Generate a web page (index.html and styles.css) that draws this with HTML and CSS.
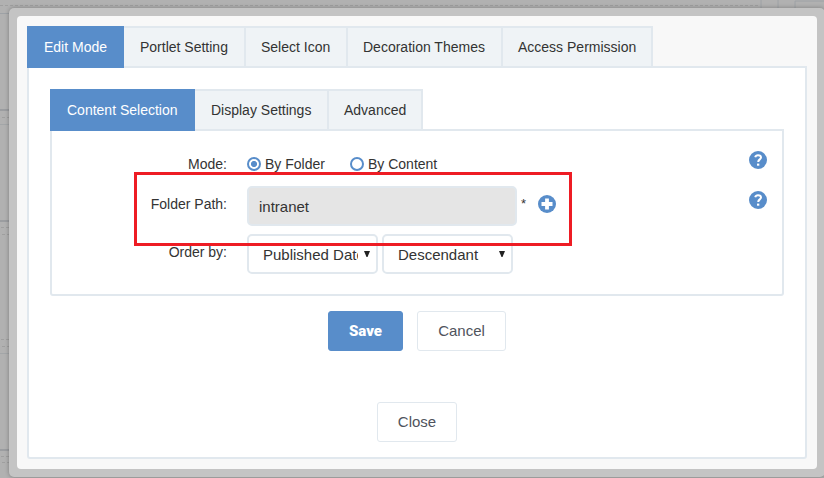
FILE: index.html
```
<!DOCTYPE html>
<html lang="en">
<head>
<meta charset="utf-8">
<title>Edit Mode</title>
<link rel="stylesheet" href="styles.css">
</head>
<body>
<svg class="backdrop" width="824" height="478" viewBox="0 0 824 478" aria-hidden="true">
  <g fill="none" stroke="#9b9da0">
    <path d="M0 5.5H760" stroke="#9f9f9f" stroke-dasharray="3 2"/>
    <path d="M761 0V8M778 0V8M795 8V1H824M0 13.5H9" stroke="#9ea2a6"/>
    <path d="M0 110H9M0 221H9M0 450H9" stroke-width="2"/>
    <path d="M0 124.5H9M0 353.5H9" stroke="#a3a6a8"/>
    <path d="M2 117.5H9M1 227.5H9M2 234.5H9M1 339.5H9M2 346.5H9M1 456.5H9M2 462.5H9" stroke="#9f9f9f" stroke-dasharray="3 2"/>
  </g>
</svg>
<div class="frame">
  <main class="dialog">
    <nav class="tabs">
      <a class="tab active t-edit">Edit Mode</a>
      <a class="tab t-portlet">Portlet Setting</a>
      <a class="tab t-icon">Select Icon</a>
      <a class="tab t-themes">Decoration Themes</a>
      <a class="tab t-access">Access Permission</a>
    </nav>
    <section class="panel">
      <nav class="tabs">
        <a class="tab active t-content">Content Selection</a>
        <a class="tab t-display">Display Settings</a>
        <a class="tab t-advanced">Advanced</a>
      </nav>
      <div class="form">
        <div class="row mode">
          <span class="label">Mode:</span>
          <span class="radio checked"></span><span class="choice first">By Folder</span>
          <span class="radio"></span><span class="choice">By Content</span>
          <svg class="help" width="18" height="18" viewBox="0 0 18 18"><circle cx="9" cy="9" r="9" fill="#588dca"/><path d="M6.2 6.2C6.6 4.8 7.6 4.2 9 4.2C10.8 4.2 12 5.2 12 6.6C12 8.4 9.2 8.5 9.2 10.9" fill="none" stroke="#fff" stroke-width="2"/><path d="M8 12.6H10.3V14.7H8Z" fill="#fff"/></svg>
        </div>
        <div class="row path">
          <span class="label">Folder Path:</span>
          <span class="field">intranet</span>
          <span class="star">*</span>
          <svg class="plus" width="18" height="18" viewBox="0 0 18 18"><circle cx="9" cy="9" r="9" fill="#588dca"/><path d="M9 3.5V14.5M3.5 9H14.5" stroke="#fff" stroke-width="3.8"/></svg>
          <svg class="help" width="18" height="18" viewBox="0 0 18 18"><circle cx="9" cy="9" r="9" fill="#588dca"/><path d="M6.2 6.2C6.6 4.8 7.6 4.2 9 4.2C10.8 4.2 12 5.2 12 6.6C12 8.4 9.2 8.5 9.2 10.9" fill="none" stroke="#fff" stroke-width="2"/><path d="M8 12.6H10.3V14.7H8Z" fill="#fff"/></svg>
        </div>
        <div class="row order">
          <span class="label">Order by:</span>
          <span class="select"><span class="value">Published Date</span><svg class="arrow" width="6" height="6" viewBox="0 0 6 6"><path d="M0 0H6L3.5 6H2.5Z" fill="#222"/></svg></span>
          <span class="select"><span class="value">Descendant</span><svg class="arrow" width="6" height="6" viewBox="0 0 6 6"><path d="M0 0H6L3.5 6H2.5Z" fill="#222"/></svg></span>
        </div>
      </div>
      <div class="actions">
        <button class="btn save">Save</button>
        <button class="btn cancel">Cancel</button>
      </div>
      <button class="btn close">Close</button>
    </section>
  </main>
</div>
<div class="highlight"></div>
</body>
</html>
```

FILE: styles.css
```
* { box-sizing: border-box; }
body {
  margin: 0;
  width: 824px;
  height: 478px;
  overflow: hidden;
  padding: 8px 0 0 9px;
  background: #b1b1b1;
  font: 14px/18px "Liberation Sans", Arial, sans-serif;
  color: #333;
}
.backdrop { position: absolute; left: 0; top: 0; z-index: -1; }
.frame {
  width: 816px;
  height: 469px;
  padding: 8px;
  background: #c4c4c4;
  border-radius: 5px;
  box-shadow: 0 0 4px rgba(0, 0, 0, .3);
}
.dialog {
  height: 453px;
  padding: 10px;
  background: #f8f8f8;
  border-radius: 4px;
}
.tabs { display: flex; height: 42px; margin-bottom: -2px; }
.tab {
  height: 42px;
  padding: 10px 0 0 15px;
  background: #eff3f6;
  border: solid #e1e8ee;
  border-width: 2px 2px 2px 0;
  line-height: 19px;
  white-space: nowrap;
}
.tab.active {
  position: relative;
  border: 0;
  padding: 12px 0 0 17px;
  background: #588dca;
  color: #fff;
}
.tab.active + .tab { padding-left: 16px; }
.t-edit { width: 97px; }
.t-portlet { width: 122px; }
.t-icon { width: 102px; }
.t-themes { width: 155px; }
.t-access { width: 150px; }
.t-content { width: 145px; }
.t-display { width: 134px; }
.t-advanced { width: 94px; }
.panel {
  height: 393px;
  padding: 21px;
  background: #fff;
  border: 2px solid #e1e8ee;
  border-radius: 0 0 3px 3px;
}
.form {
  width: 734px;
  height: 167px;
  padding: 20px 15px 0 0;
  border: 2px solid #e1e8ee;
  border-radius: 0 0 3px 3px;
}
.row { display: flex; height: 40px; }
.label { width: 175px; margin-right: 20px; text-align: right; }
.mode { height: 35px; padding-top: 4px; }
.mode .help { margin-top: -4px; }
.radio {
  width: 14px;
  height: 14px;
  margin: 2px 4px 0 0;
  border: 2px solid #588dca;
  border-radius: 50%;
}
.radio.checked { background: radial-gradient(circle, #588dca 2.7px, #fff 3.4px); }
.choice.first { width: 85px; }
.help { margin-left: auto; }
.path .label { padding-top: 9px; }
.field {
  width: 270px;
  height: 40px;
  padding: 10px;
  background: #e5e5e5;
  border: 2px solid #e1e8ee;
  border-radius: 5px;
  font-size: 15px;
}
.star { width: 21px; padding: 9px 0 0 4px; font-size: 13px; }
.plus { margin: 9px 0 0; }
.path .help { margin-top: 5px; }
.order { margin-top: 8px; }
.order .label { padding-top: 9px; }
.select {
  display: flex;
  width: 131px;
  height: 40px;
  margin-right: 4px;
  padding: 10px 6px 0 14px;
  border: 2px solid #e1e8ee;
  border-radius: 5px;
  font-size: 15px;
}
.value { width: 95px; overflow: hidden; white-space: nowrap; }
.arrow { margin: 5px 0 0 auto; }
.actions { display: flex; gap: 14px; margin: 15px 0 51px 278px; }
.btn {
  display: block;
  height: 40px;
  padding: 0 0 1px;
  background: #fff;
  border: 1px solid #e1e8ee;
  border-radius: 3px;
  font: 15px "Liberation Sans", Arial, sans-serif;
  color: #4f535c;
}
.save {
  width: 75px;
  background: #588dca;
  border-color: #588dca;
  font: 900 15px Roboto, sans-serif;
  color: #fff;
}
.cancel { width: 89px; }
.close { width: 80px; margin-left: 327px; }
.highlight {
  position: absolute;
  left: 134px;
  top: 172px;
  width: 438px;
  height: 74px;
  border: 3px solid #ee1c24;
}
```
